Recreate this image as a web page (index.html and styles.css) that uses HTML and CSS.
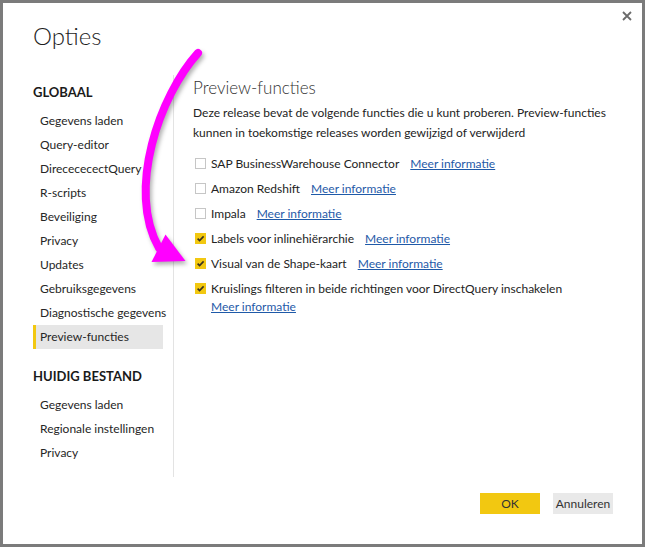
FILE: index.html
```html
<!DOCTYPE html>
<html lang="nl">
<head>
<meta charset="utf-8">
<title>Opties</title>
<link rel="stylesheet" href="styles.css">
</head>
<body>
<div class="dialog">
  <div class="header">
    <h1 class="title">Opties</h1>
    <button class="close" aria-label="Sluiten">
      <svg width="10" height="10" viewBox="0 0 10 10"><path d="M1 1 L9 9 M9 1 L1 9" stroke="#6b6b6b" stroke-width="1.8" fill="none"/></svg>
    </button>
  </div>
  <div class="main">
    <nav class="nav">
      <div class="nav-heading">GLOBAAL</div>
      <ul class="nav-list">
        <li>Gegevens laden</li>
        <li>Query-editor</li>
        <li>DirecececectQuery</li>
        <li>R-scripts</li>
        <li>Beveiliging</li>
        <li>Privacy</li>
        <li>Updates</li>
        <li>Gebruiksgegevens</li>
        <li>Diagnostische gegevens</li>
        <li class="active">Preview-functies</li>
      </ul>
      <div class="nav-heading second">HUIDIG BESTAND</div>
      <ul class="nav-list">
        <li>Gegevens laden</li>
        <li>Regionale instellingen</li>
        <li>Privacy</li>
      </ul>
    </nav>
    <section class="pane">
      <h2 class="pane-title">Preview-functies</h2>
      <p class="desc">Deze release bevat de volgende functies die u kunt proberen. Preview-functies kunnen in toekomstige releases worden gewijzigd of verwijderd</p>
      <ul class="features">
        <li class="feature"><span class="box"></span><span class="label"><span>SAP BusinessWarehouse Connector</span><a class="more" href="#">Meer informatie</a></span></li>
        <li class="feature"><span class="box"></span><span class="label"><span>Amazon Redshift</span><a class="more" href="#">Meer informatie</a></span></li>
        <li class="feature"><span class="box"></span><span class="label"><span>Impala</span><a class="more" href="#">Meer informatie</a></span></li>
        <li class="feature"><span class="box checked"><svg width="11" height="11" viewBox="0 0 11 11"><path d="M2.6 5.6 L4.6 7.6 L8.6 3.4" stroke="#3a3320" stroke-width="1.6" fill="none"/></svg></span><span class="label"><span>Labels voor inlinehiërarchie</span><a class="more" href="#">Meer informatie</a></span></li>
        <li class="feature"><span class="box checked"><svg width="11" height="11" viewBox="0 0 11 11"><path d="M2.6 5.6 L4.6 7.6 L8.6 3.4" stroke="#3a3320" stroke-width="1.6" fill="none"/></svg></span><span class="label"><span>Visual van de Shape-kaart</span><a class="more" href="#">Meer informatie</a></span></li>
        <li class="feature"><span class="box checked"><svg width="11" height="11" viewBox="0 0 11 11"><path d="M2.6 5.6 L4.6 7.6 L8.6 3.4" stroke="#3a3320" stroke-width="1.6" fill="none"/></svg></span><span class="label"><span>Kruislings filteren in beide richtingen voor DirectQuery inschakelen</span><a class="more" href="#">Meer informatie</a></span></li>
      </ul>
    </section>
  </div>
  <div class="footer">
    <button class="btn primary">OK</button>
    <button class="btn">Annuleren</button>
  </div>
  <svg class="arrow" width="645" height="547" viewBox="0 0 645 547">
    <path d="M198 53 C160 95 126 190 159 248" stroke="#ff00ff" stroke-width="8" fill="none" stroke-linecap="round"/>
    <polygon points="151.5,262 185.5,261 165.5,234.5" fill="#ff00ff"/>
  </svg>
</div>
</body>
</html>
```
FILE: styles.css
```css
* { box-sizing: border-box; }
html, body { margin: 0; padding: 0; background: #7b7b7b; }
body {
  font-family: Lato, "Noto Sans", sans-serif;
  font-size: 12px;
  color: #232323;
}
.dialog {
  position: relative;
  width: 645px;
  height: 547px;
  border: 3px solid #7b7b7b;
  background: #fff;
  display: flex;
  flex-direction: column;
}
.header {
  display: flex;
  justify-content: space-between;
  align-items: flex-start;
  padding: 0 10px 0 30px;
}
.title {
  margin: 17px 0 0;
  font-size: 24px;
  font-weight: 300;
  line-height: 32px;
  color: #1e1e1e;
}
.close {
  margin-top: 8px;
  padding: 0;
  border: 0;
  background: none;
  width: 10px;
  height: 10px;
  display: flex;
}
.main {
  display: flex;
  margin-top: 23px;
  height: 402px;
}
.nav {
  width: 140px;
  margin-left: 30px;
  padding-top: 7px;
}
.nav-heading {
  font-size: 13px;
  font-weight: 700;
  line-height: 20px;
  color: #1a1a1a;
  margin-bottom: 7px;
}
.nav-heading.second { margin-top: 17px; }
.nav-list {
  list-style: none;
  margin: 0;
  padding: 0;
  width: 130px;
}
.nav-list li {
  line-height: 24px;
  height: 24px;
  padding-left: 7px;
  white-space: nowrap;
  color: #262626;
}
.nav-list li.active {
  background: #e6e6e6;
  border-left: 3px solid #f2c811;
  padding-left: 4px;
}
.pane {
  flex: 1;
  border-left: 1px solid #e3e3e3;
  padding: 2px 25px 0 19px;
}
.pane-title {
  margin: 0;
  font-size: 17px;
  font-weight: 300;
  line-height: 22px;
  color: #333;
}
.desc {
  margin: 4px 0 0;
  line-height: 20px;
}
.features {
  list-style: none;
  margin: 12px 0 0;
  padding: 0 0 0 2px;
}
.feature {
  display: flex;
  align-items: flex-start;
  gap: 5px;
  line-height: 18px;
  margin-bottom: 7px;
}
.box {
  flex: none;
  width: 11px;
  height: 11px;
  margin-top: 3px;
  border: 1.5px solid #c6c6c6;
  display: flex;
}
.box.checked {
  border: 0;
  background: #f2c811;
}
.label {
  display: flex;
  flex-wrap: wrap;
  column-gap: 11px;
}
.more {
  color: #1f5aa8;
  text-decoration: underline;
}
.footer {
  flex: 1;
  display: flex;
  justify-content: flex-end;
  align-items: flex-start;
  gap: 13px;
  padding: 16px 29px 0 0;
}
.btn {
  width: 60px;
  height: 21px;
  border: 0;
  padding: 0;
  font-family: inherit;
  font-size: 12px;
  color: #333;
  background: #e9e9e9;
}
.btn.primary { background: #f2c811; }
.arrow {
  position: absolute;
  left: -3px;
  top: -3px;
  pointer-events: none;
  filter: drop-shadow(2px 3px 2px rgba(0, 0, 0, 0.3));
}
```
